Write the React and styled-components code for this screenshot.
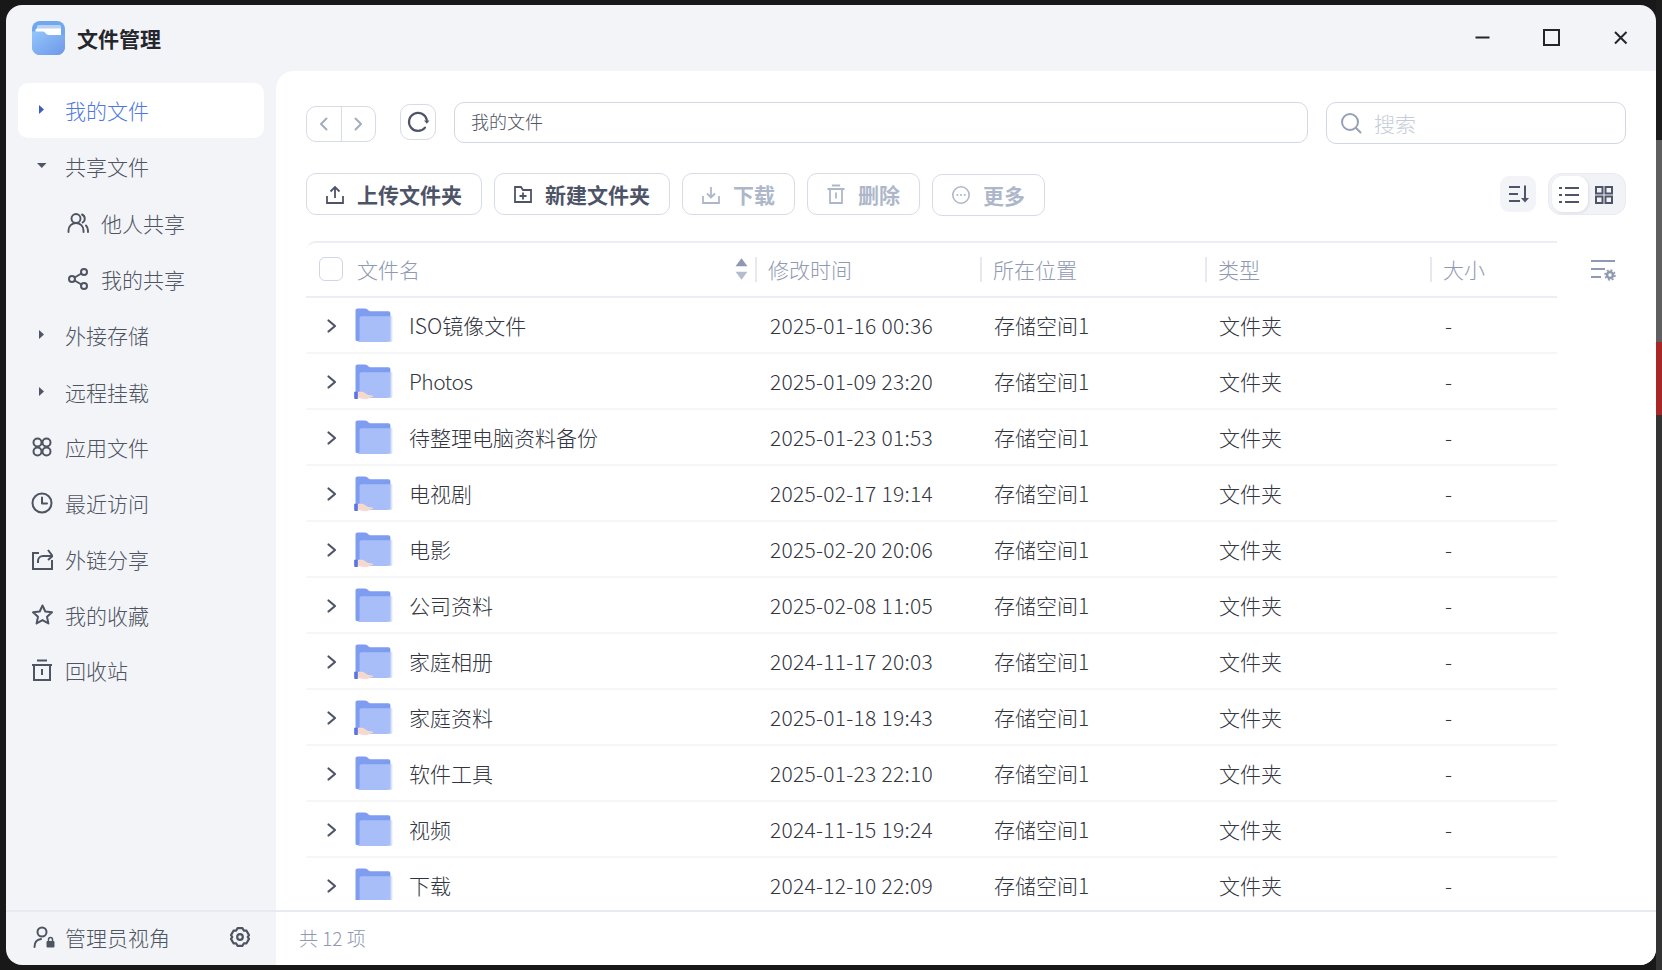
import React from "react";
import styled, { createGlobalStyle } from "styled-components";

const Global = createGlobalStyle`
  html, body { margin: 0; padding: 0; height: 100%; }
  body {
    overflow: hidden;
    font-family: "Noto Sans CJK SC", "Noto Sans", sans-serif;
    background:
      linear-gradient(to bottom, #1c1c1c 0 140px, #5f5f5f 140px 342px, #a92626 342px 415px, #333 415px 100%) right top / 6px 100% no-repeat,
      #181818;
  }
  * { box-sizing: border-box; }
`;

const Win = styled.div`
  margin: 5px 6px;
  width: 1650px;
  height: 960px;
  border-radius: 16px;
  overflow: hidden;
  background: #f3f4f8;
  display: flex;
  flex-direction: column;
`;
const TitleBar = styled.header`
  height: 66px;
  flex: none;
  display: flex;
  align-items: center;
  padding: 0 27px 0 26px;
`;
const AppName = styled.div`
  font-size: 21px;
  font-weight: 700;
  color: #24262c;
  margin-left: 11px;
  line-height: 1;
  margin-top: 1px;
`;
const WinControls = styled.div`
  margin-left: auto;
  display: flex;
  align-items: center;
  gap: 52px;
  margin-top: -2px;
`;
const WinBtn = styled.svg`
  width: 17px;
  height: 17px;
  display: block;
  color: #23252b;
`;
const Body = styled.div`
  flex: 1;
  min-height: 0;
  display: flex;
`;
const Sidebar = styled.aside`
  width: 270px;
  flex: none;
  display: flex;
  flex-direction: column;
`;
const NavList = styled.nav`
  flex: 1;
  padding: 12px 12px 0;
`;
const NavItem = styled.div`
  height: ${p => p.$h || 56}px;
  display: flex;
  align-items: center;
  padding: ${p => p.$top || 0}px 0 ${p => p.$lift || 0}px ${p => (p.$sub ? 48 : 13)}px;
  border-radius: 10px;
  font-size: 21px;
  font-weight: 300;
  color: ${p => (p.$active ? "#4e78e0" : "#4f5462")};
  background: ${p => (p.$active ? "#fff" : "transparent")};
`;
const NavIconSlot = styled.span`
  width: ${p => (p.$sub ? 35 : 34)}px;
  flex: none;
  display: flex;
  align-items: center;
`;
const SideFoot = styled.div`
  height: 55px;
  flex: none;
  border-top: 2px solid #e8eaf2;
  display: flex;
  align-items: center;
  padding: 0 25px 3px 26px;
  font-size: 21px;
  font-weight: 300;
  color: #4f5462;
`;
const FootIcon = styled.span`
  width: 33px;
  flex: none;
  display: flex;
`;
const GearSlot = styled.span`
  margin-left: auto;
  display: flex;
`;
const Main = styled.main`
  flex: 1;
  min-width: 0;
  background: #fff;
  border-top-left-radius: 18px;
  display: flex;
  flex-direction: column;
`;
const Content = styled.div`
  flex: 1;
  min-height: 0;
  padding: 31px 30px 0;
  display: flex;
  flex-direction: column;
`;
const PathBar = styled.div`
  display: flex;
  align-items: flex-start;
  height: 42px;
`;
const NavSeg = styled.div`
  width: 70px;
  height: 36px;
  margin-top: 4px;
  border: 1.5px solid #d7dbe7;
  border-radius: 10px;
  display: flex;
  color: #a3abbf;
`;
const SegBtn = styled.span`
  flex: 1;
  display: flex;
  align-items: center;
  justify-content: center;
  & + & { border-left: 1.5px solid #d7dbe7; }
`;
const RefreshBtn = styled.div`
  width: 36px;
  height: 36px;
  margin: 2px 18px 0 24px;
  border: 1.5px solid #d7dbe7;
  border-radius: 10px;
  display: flex;
  align-items: center;
  justify-content: center;
  color: #4f5568;
`;
const AddressBox = styled.div`
  width: 854px;
  height: 41px;
  border: 1.5px solid #d2d7e4;
  border-radius: 10px;
  display: flex;
  align-items: center;
  padding: 0 0 3px 16px;
  font-size: 18px;
  font-weight: 300;
  color: #4f5462;
`;
const SearchBox = styled.div`
  width: 300px;
  height: 42px;
  margin-left: 18px;
  border: 1.5px solid #d2d7e4;
  border-radius: 10px;
  display: flex;
  align-items: center;
  padding-left: 13px;
  gap: 12px;
  font-size: 21px;
  font-weight: 300;
  color: #c6ccd9;
`;
const ToolBar = styled.div`
  display: flex;
  align-items: center;
  gap: 12px;
  margin-top: 28px;
  height: 43px;
`;
const ToolBtn = styled.div`
  width: ${p => p.$w}px;
  height: 42px;
  margin-top: ${p => (p.$low ? 2 : 0)}px;
  border: 1.5px solid #d7dbe7;
  border-radius: 10px;
  display: flex;
  align-items: center;
  padding-left: 18px;
  gap: 12px;
  font-size: 21px;
  font-weight: 700;
  color: ${p => (p.$off ? "#aeb7ca" : "#4d5468")};
`;
const ToolRight = styled.div`
  margin-left: auto;
  display: flex;
  align-items: center;
  gap: 12px;
`;
const SortBtn = styled.div`
  width: 36px;
  height: 36px;
  border-radius: 9px;
  background: #f3f4f8;
  display: flex;
  align-items: center;
  justify-content: center;
  color: #4f5568;
`;
const ViewToggle = styled.div`
  width: 78px;
  height: 42px;
  border-radius: 13px;
  background: #f2f3f7;
  border: 1px solid #e9ebf1;
  display: flex;
  align-items: center;
  padding-left: 3px;
  color: #4f5568;
`;
const ViewOpt = styled.span`
  width: 36px;
  height: 36px;
  border-radius: 11px;
  display: flex;
  align-items: center;
  justify-content: center;
  padding: 2px ${p => (p.$on ? 2 : 4)}px 0 0;
  background: ${p => (p.$on ? "#fff" : "transparent")};
  box-shadow: ${p => (p.$on ? "1px 1px 3px rgba(60,70,100,.12)" : "none")};
`;
const TableWrap = styled.div`
  margin-top: 26px;
  display: flex;
  flex: 1;
  min-height: 0;
`;
const Table = styled.div`
  width: 1251px;
  flex: none;
  overflow: hidden;
  height: 659px;
`;
const HeadRow = styled.div`
  height: 57px;
  border-top: 2px solid #eceef3;
  border-bottom: 2px solid #eceef3;
  border-top-left-radius: 10px;
  display: flex;
  align-items: center;
  padding-bottom: 1px;
  font-size: 21px;
  font-weight: 300;
  color: #8f99b3;
`;
const NameHead = styled.div`
  width: 449px;
  flex: none;
  display: flex;
  align-items: center;
  padding-left: 13px;
  gap: 14px;
`;
const Check = styled.span`
  width: 24px;
  height: 24px;
  border: 1.5px solid #d0d6e3;
  border-radius: 6px;
  background: #fff;
`;
const SortArrows = styled.svg`
  margin-left: auto;
  margin-right: 7px;
  display: block;
`;
const HeadCell = styled.div`
  width: ${p => p.$w}px;
  flex: none;
  height: 25px;
  border-left: 2px solid #e6e9f0;
  padding-left: 11px;
  display: flex;
  align-items: center;
`;
const Row = styled.div`
  height: 56px;
  border-bottom: 2px solid #f5f6f8;
  display: flex;
  align-items: center;
  font-size: 21px;
  font-weight: 300;
  color: #33363f;
`;
const NameCell = styled.div`
  width: 450px;
  flex: none;
  display: flex;
  align-items: center;
  padding-left: 18px;
`;
const Chevron = styled.span`
  width: 29px;
  flex: none;
  display: flex;
  padding-top: 2px;
  color: #4f5568;
`;
const FolderSlot = styled.span`
  width: 56px;
  flex: none;
  display: flex;
`;
const NameText = styled.span`
  letter-spacing: ${p => (p.$latin ? "-0.5px" : "0")};
`;
const Cell = styled.div`
  width: ${p => p.$w}px;
  flex: none;
  padding-left: ${p => p.$pad || 13}px;
  letter-spacing: ${p => p.$ls || 0}px;
  white-space: nowrap;
`;
const ColSetting = styled.div`
  margin-left: 33px;
  height: 57px;
  display: flex;
  align-items: center;
  padding-top: 2px;
  color: #8f99b3;
`;
const MainFoot = styled.div`
  height: 55px;
  flex: none;
  border-top: 2px solid #e8eaf2;
  display: flex;
  align-items: center;
  padding: 0 0 3px 23px;
  font-size: 19px;
  font-weight: 300;
  color: #8f99b3;
`;

const Line = ({ size = 24, children, sw = 2, ...r }) => (
  <svg width={size} height={size} viewBox={`0 0 ${size} ${size}`} fill="none" stroke="currentColor" strokeWidth={sw} strokeLinecap="round" strokeLinejoin="round" style={{ display: "block" }} {...r}>
    {children}
  </svg>
);

const Logo = () => (
  <svg width="34" height="35" viewBox="0 0 34 35" style={{ display: "block" }}>
    <defs>
      <linearGradient id="lg" x1="0" y1="0" x2="1" y2="1">
        <stop offset="0" stopColor="#93c6fb" />
        <stop offset="1" stopColor="#6e97e8" />
      </linearGradient>
    </defs>
    <rect x="0" y="0" width="33" height="34" rx="8" fill="#6fa8ee" />
    <rect x="5" y="4" width="24" height="6" rx="1.500" fill="#b9d2f6" />
    <path d="M3.500 9q0-1.500 1.500-1.500h24V16H3.500z" fill="#fff" />
    <path d="M0 10.500h11c2 0 3 3.500 6 3.500h16v12a8 8 0 0 1-8 8H8a8 8 0 0 1-8-8z" fill="url(#lg)" />
  </svg>
);

const Folder = ({ shared, id }) => (
  <svg width="42" height="37" viewBox="0 0 40 36" style={{ display: "block" }}>
    <defs>
      <linearGradient id={"f" + id} x1="0" y1="0" x2="1" y2="0">
        <stop offset="0" stopColor="#a7bef8" />
        <stop offset=".85" stopColor="#a7bef8" />
        <stop offset="1" stopColor="#c8d6fb" stopOpacity=".5" />
      </linearGradient>
    </defs>
    <path d="M2 3.500a2 2 0 0 1 2-2h7.500c1.200 0 2 .8 3 1.600.8.7 1.400 1 2.500 1h17a2 2 0 0 1 2 2V33H3.500A1.500 1.500 0 0 1 2 31.500z" fill="#7f9df0" />
    <path d="M6 11a2 2 0 0 1 2-2h30v23.500a1.500 1.500 0 0 1-1.500 1.500H3.600C5 33.500 6 33 6 31z" fill={`url(#f${id})`} />
    {shared && (
      <g>
        <path d="M.7 28h3.600v7H1.700a1 1 0 0 1-1-1z" fill="#5b76e0" />
        <path d="M4.300 28h4c2 0 3 1.600 5 2.600 1.600.8 5 .8 6 1.500-.5 1.500-2.400 1.400-3.800 1.800-1.200 1.400-3.200 1.700-5 1.100-2.400-.3-4.200-.4-6.200-.6z" fill="#f6d9cd" />
      </g>
    )}
  </svg>
);

const Caret = ({ dir, color = "#4f5568" }) => (
  <svg width="12" height="12" viewBox="0 0 12 12" style={{ display: "block", marginLeft: dir === "down" ? 6 : 8 }}>
    <path d={dir === "down" ? "M0 3h9.500L4.750 8z" : "M0 1l5 4.500L0 10z"} fill={color} />
  </svg>
);

const rows = [
  ["ISO镜像文件", "2025-01-16 00:36", false],
  ["Photos", "2025-01-09 23:20", true],
  ["待整理电脑资料备份", "2025-01-23 01:53", false],
  ["电视剧", "2025-02-17 19:14", true],
  ["电影", "2025-02-20 20:06", true],
  ["公司资料", "2025-02-08 11:05", false],
  ["家庭相册", "2024-11-17 20:03", true],
  ["家庭资料", "2025-01-18 19:43", true],
  ["软件工具", "2025-01-23 22:10", false],
  ["视频", "2024-11-15 19:24", false],
  ["下载", "2024-12-10 22:09", false],
];

export default function App() {
  return (
    <>
      <Global />
      <Win>
        <TitleBar>
          <Logo />
          <AppName>文件管理</AppName>
          <WinControls>
            <WinBtn viewBox="0 0 17 17"><path d="M1.500 8.500h14" stroke="currentColor" strokeWidth="2" /></WinBtn>
            <WinBtn viewBox="0 0 17 17"><rect x="1" y="1" width="15" height="15" fill="none" stroke="currentColor" strokeWidth="2" /></WinBtn>
            <WinBtn viewBox="0 0 17 17"><path d="M3 3l11.500 11.500M14.500 3L3 14.500" stroke="currentColor" strokeWidth="2" /></WinBtn>
          </WinControls>
        </TitleBar>
        <Body>
          <Sidebar>
            <NavList>
              <NavItem $active $h={55} $lift={2}><NavIconSlot><Caret color="#3d5cc4" /></NavIconSlot>我的文件</NavItem>
              <NavItem $lift={1}><NavIconSlot><Caret dir="down" /></NavIconSlot>共享文件</NavItem>
              <NavItem $sub $top={2}>
                <NavIconSlot $sub>
                  <Line size={24} sw={1.900}><circle cx="10" cy="7.500" r="4.500" /><path d="M2.500 21v-1.500a7.500 7.500 0 0 1 15 0V21" /><path d="M16 3.500a4.500 4.500 0 0 1 .6 8" /><path d="M20 14.500a7 7 0 0 1 2 5V21" /></Line>
                </NavIconSlot>
                他人共享
              </NavItem>
              <NavItem $sub $top={1}>
                <NavIconSlot $sub>
                  <Line size={24} sw={2}><circle cx="18" cy="5" r="3" /><circle cx="6" cy="12" r="3" /><circle cx="18" cy="19" r="3" /><path d="M8.600 13.500l6.800 4M15.400 6.500l-6.800 4" /></Line>
                </NavIconSlot>
                我的共享
              </NavItem>
              <NavItem $top={2}><NavIconSlot><Caret /></NavIconSlot>外接存储</NavItem>
              <NavItem $top={3}><NavIconSlot><Caret /></NavIconSlot>远程挂载</NavItem>
              <NavItem $top={2}>
                <NavIconSlot>
                  <Line size={22} sw={2}><circle cx="6.500" cy="6.500" r="4" /><circle cx="15.500" cy="6.500" r="4" /><circle cx="6.500" cy="15.500" r="4" /><circle cx="15.500" cy="15.500" r="4" /></Line>
                </NavIconSlot>
                应用文件
              </NavItem>
              <NavItem $top={2}>
                <NavIconSlot>
                  <Line size={22} sw={2}><circle cx="11" cy="11" r="9.500" /><path d="M11 5.500V11.500H16" /></Line>
                </NavIconSlot>
                最近访问
              </NavItem>
              <NavItem $top={1}>
                <NavIconSlot>
                  <Line size={22} sw={2} strokeLinecap="butt" strokeLinejoin="miter"><path d="M8 5H2v16h19v-9" /><path d="M7 15v-2a5 5 0 0 1 5-5h9" /><path d="M17 2l4.500 6-4.500 4" /></Line>
                </NavIconSlot>
                外链分享
              </NavItem>
              <NavItem $top={1}>
                <NavIconSlot>
                  <Line size={23} sw={2}><path d="M11.500 2.500l2.800 6 6.700.8-5 4.500 1.400 6.600-5.900-3.300-5.900 3.300 1.400-6.600-5-4.500 6.700-.8z" /></Line>
                </NavIconSlot>
                我的收藏
              </NavItem>
              <NavItem $lift={1}>
                <NavIconSlot>
                  <Line size={22} sw={2} strokeLinecap="butt" strokeLinejoin="miter"><path d="M3 6h16v15H3zM1 6h20M6 1.500h10M11 10v6" /></Line>
                </NavIconSlot>
                回收站
              </NavItem>
            </NavList>
            <SideFoot>
              <FootIcon>
                <Line size={24} sw={2}><circle cx="10" cy="7" r="4.500" /><path d="M2.500 22c0-4.500 2.500-7.500 6.500-8" /><rect x="14.500" y="16" width="8" height="6.500" rx="1" fill="currentColor" stroke="none" /><path d="M16.500 16v-1.500a2 2 0 0 1 4 0V16" strokeWidth="1.500" /></Line>
              </FootIcon>
              管理员视角
              <GearSlot>
                <Line size={22} sw={2.200}><path d="M8.500 2.200h5l1.300 2.400 2.700.1 2.500 4.400-1.300 1.900 1.300 1.900-2.500 4.400-2.700.1-1.300 2.400h-5l-1.300-2.400-2.700-.1L2 12.900l1.300-1.900L2 9.100l2.500-4.400 2.700-.1z" /><circle cx="11" cy="11" r="2.800" /></Line>
              </GearSlot>
            </SideFoot>
          </Sidebar>
          <Main>
            <Content>
              <PathBar>
                <NavSeg>
                  <SegBtn><Line size={16} sw={2}><path d="M10.500 2.500L5 8l5.500 5.500" /></Line></SegBtn>
                  <SegBtn><Line size={16} sw={2}><path d="M5.500 2.500L11 8l-5.500 5.500" /></Line></SegBtn>
                </NavSeg>
                <RefreshBtn>
                  <Line size={24} sw={2.200}><path d="M19 17.600A9 9 0 1 1 20.800 10" /><path d="M18 10.500h5.500l-2.700 3.200z" fill="currentColor" stroke="none" /></Line>
                </RefreshBtn>
                <AddressBox>我的文件</AddressBox>
                <SearchBox>
                  <Line size={22} sw={2} color="#96a0b7"><circle cx="10" cy="10" r="8" /><path d="M16 16l4.500 4.500" /></Line>
                  搜索
                </SearchBox>
              </PathBar>
              <ToolBar>
                <ToolBtn $w={176}>
                  <Line size={20} sw={1.800} strokeLinecap="butt" strokeLinejoin="miter"><path d="M2 12v7h16v-7M10 14V3M5.500 7.500L10 3l4.500 4.500" /></Line>
                  上传文件夹
                </ToolBtn>
                <ToolBtn $w={176}>
                  <Line size={20} sw={1.800} strokeLinecap="butt" strokeLinejoin="miter"><path d="M2 3h6l2 3h8v12H2zM10 8.500v7M6.500 12h7" /></Line>
                  新建文件夹
                </ToolBtn>
                <ToolBtn $w={113} $off>
                  <Line size={20} sw={1.800} strokeLinecap="butt" strokeLinejoin="miter"><path d="M2 12v7h16v-7M10 3v10M6 9.500l4 4 4-4" /></Line>
                  下载
                </ToolBtn>
                <ToolBtn $w={113} $off>
                  <Line size={20} sw={1.800} strokeLinecap="butt" strokeLinejoin="miter"><path d="M4 5h12v14H4zM1.500 5h17M6 1.500h8M10 8.500v6" /></Line>
                  删除
                </ToolBtn>
                <ToolBtn $w={113} $off $low>
                  <Line size={20} sw={1.600}><circle cx="10" cy="10" r="8.200" /><path d="M6.300 10h.1M10 10h.1M13.700 10h.1" strokeWidth="2" /></Line>
                  更多
                </ToolBtn>
                <ToolRight>
                  <SortBtn>
                    <Line size={24} sw={2} strokeLinecap="butt" strokeLinejoin="miter"><path d="M3 5h11M3 12h9M3 19h11M19 3.500v15" /><path d="M15 16h8l-4 4.500z" fill="currentColor" stroke="none" /></Line>
                  </SortBtn>
                  <ViewToggle>
                    <ViewOpt $on>
                      <Line size={20} sw={2.200} strokeLinecap="butt"><path d="M6 3h14M6 10h14M6 17h14M0 3h3M0 10h3M0 17h3" /></Line>
                    </ViewOpt>
                    <ViewOpt>
                      <Line size={20} sw={2} strokeLinecap="butt" strokeLinejoin="miter"><rect x="2" y="2" width="6.500" height="6.500" /><rect x="11.500" y="2" width="6.500" height="6.500" /><rect x="2" y="11.500" width="6.500" height="6.500" /><rect x="11.500" y="11.500" width="6.500" height="6.500" /></Line>
                    </ViewOpt>
                  </ViewToggle>
                </ToolRight>
              </ToolBar>
              <TableWrap>
                <Table>
                  <HeadRow>
                    <NameHead>
                      <Check />
                      文件名
                      <SortArrows width="13" height="22" viewBox="0 0 12 20">
                        <path d="M6 0l5.500 7.500H.5z" fill="#8f99b3" />
                        <path d="M6 20l5.500-7.500H.5z" fill="#b5bccd" />
                      </SortArrows>
                    </NameHead>
                    <HeadCell $w={225}>修改时间</HeadCell>
                    <HeadCell $w={225}>所在位置</HeadCell>
                    <HeadCell $w={225}>类型</HeadCell>
                    <HeadCell $w={126}>大小</HeadCell>
                  </HeadRow>
                  {rows.map(([name, date, shared], i) => (
                    <Row key={name}>
                      <NameCell>
                        <Chevron>
                          <Line size={16} sw={2.200}><path d="M4.500 2.500L11 8l-6.500 5.500" /></Line>
                        </Chevron>
                        <FolderSlot><Folder shared={shared} id={i} /></FolderSlot>
                        <NameText $latin={name === "Photos"}>{name}</NameText>
                      </NameCell>
                      <Cell $w={225} $pad={14} $ls={0.27}>{date}</Cell>
                      <Cell $w={225}>存储空间1</Cell>
                      <Cell $w={225}>文件夹</Cell>
                      <Cell $w={126} $pad={14}>-</Cell>
                    </Row>
                  ))}
                </Table>
                <ColSetting>
                  <Line size={26} sw={2} strokeLinecap="butt"><path d="M1 3h24M1 11h14M1 19h10" /><circle cx="20" cy="17" r="3" fill="none" strokeWidth="2.600" /><circle cx="20" cy="17" r="5" fill="none" strokeWidth="1.500" strokeDasharray="2 1.900" /></Line>
                </ColSetting>
              </TableWrap>
            </Content>
            <MainFoot>共 12 项</MainFoot>
          </Main>
        </Body>
      </Win>
    </>
  );
}
